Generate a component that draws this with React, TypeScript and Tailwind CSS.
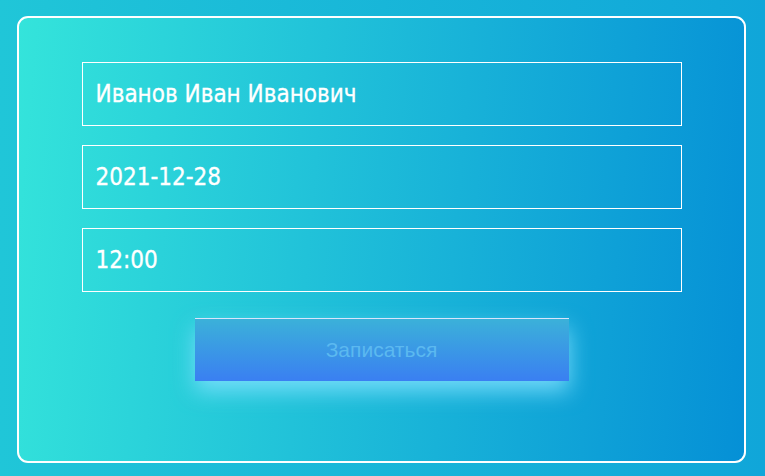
export default function App() {
  const fields = ["Иванов Иван Иванович", "2021-12-28", "12:00"]
  return (
    <div className="h-[476px] w-[765px] bg-[linear-gradient(90deg,#20c6d8,#10a6d9)] pl-[17px] pr-[19px] pt-[16px] pb-[13px]">
      <div className="flex h-[447px] flex-col items-center rounded-[11px] border-2 border-white bg-[linear-gradient(95deg,#34e4db,#0590d6)] pt-[44px]">
        <div className="flex w-[600px] flex-col gap-[19px]">
          {fields.map((f) => (
            <div
              key={f}
              className="flex h-[64px] items-center border border-white px-[13px] text-[24px] text-white [-webkit-text-stroke:0.3px_white] [font-family:'DejaVu_Sans_Condensed','DejaVu_Sans',sans-serif]"
            >
              {f}
            </div>
          ))}
        </div>
        <button className="mt-[26px] h-[63px] w-[374px] border-t border-white/80 bg-[linear-gradient(180deg,#3bb1d9,#3a7ff2)] text-[21px] text-[#5bb9f0] shadow-[0_10px_22px_rgba(130,225,255,0.85)] [font-family:'Liberation_Sans',Arial,sans-serif]">
          Записаться
        </button>
      </div>
    </div>
  )
}
